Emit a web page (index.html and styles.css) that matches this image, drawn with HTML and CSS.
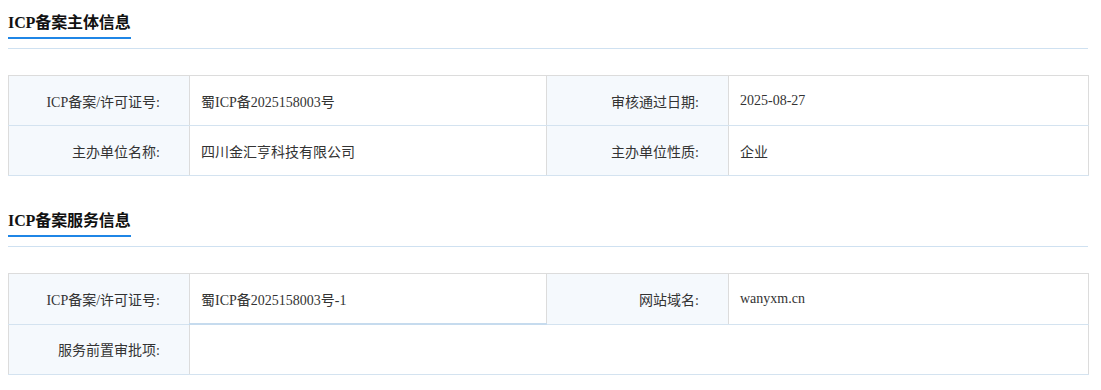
FILE: index.html
```html
<!DOCTYPE html>
<html lang="zh-CN">
<head>
<meta charset="utf-8">
<title>ICP备案信息</title>
<link rel="stylesheet" href="styles.css">
</head>
<body>
<div class="wrap">
  <section class="sec">
    <div class="sec-head"><h2 class="sec-title">ICP备案主体信息</h2></div>
    <table class="info">
      <colgroup><col class="c-l1"><col class="c-v1"><col class="c-l2"><col class="c-v2"></colgroup>
      <tr>
        <td class="lbl">ICP备案/许可证号:</td>
        <td class="val">蜀ICP备2025158003号</td>
        <td class="lbl">审核通过日期:</td>
        <td class="val">2025-08-27</td>
      </tr>
      <tr>
        <td class="lbl">主办单位名称:</td>
        <td class="val">四川金汇亨科技有限公司</td>
        <td class="lbl">主办单位性质:</td>
        <td class="val">企业</td>
      </tr>
    </table>
  </section>
  <section class="sec">
    <div class="sec-head"><h2 class="sec-title">ICP备案服务信息</h2></div>
    <table class="info">
      <colgroup><col class="c-l1"><col class="c-v1"><col class="c-l2"><col class="c-v2"></colgroup>
      <tr>
        <td class="lbl">ICP备案/许可证号:</td>
        <td class="val val-strong">蜀ICP备2025158003号-1</td>
        <td class="lbl">网站域名:</td>
        <td class="val">wanyxm.cn</td>
      </tr>
      <tr>
        <td class="lbl">服务前置审批项:</td>
        <td class="val" colspan="3"></td>
      </tr>
    </table>
  </section>
</div>
</body>
</html>
```
FILE: styles.css
```css
html, body {
  margin: 0;
  padding: 0;
  background: #fff;
}
body {
  font-family: "Liberation Serif", "Noto Sans CJK SC", serif;
  color: #333;
}
.wrap {
  width: 1080px;
  margin-left: 8px;
}
.sec {
  margin-bottom: 22px;
}
.sec-head {
  display: flex;
  border-bottom: 1px solid #cfe1f1;
  padding-bottom: 9px;
}
.sec-title {
  margin: 0;
  padding-top: 11px;
  padding-bottom: 2px;
  font-size: 16px;
  line-height: 24px;
  font-weight: bold;
  color: #111;
  letter-spacing: -0.1px;
  border-bottom: 2px solid #1f86e6;
}
.info {
  margin-top: 26px;
  width: 1080px;
  border-collapse: collapse;
  table-layout: fixed;
  border: 1px solid #dcdcdc;
  font-size: 14px;
}
.c-l1 { width: 181px; }
.c-v1 { width: 357px; }
.c-l2 { width: 182px; }
.c-v2 { width: 360px; }
.info td {
  height: 49px;
  padding: 0;
  border-right: 1px solid #dcdcdc;
  border-bottom: 1px solid #d4e3f0;
  vertical-align: middle;
  white-space: nowrap;
}
.info .lbl {
  background: #f5f9fd;
  text-align: right;
  padding-right: 29px;
  color: #333;
}
.info .val {
  padding-left: 11px;
  color: #333;
}
.info .val-strong {
  border-bottom: 2px solid #c6dbee;
}
```
